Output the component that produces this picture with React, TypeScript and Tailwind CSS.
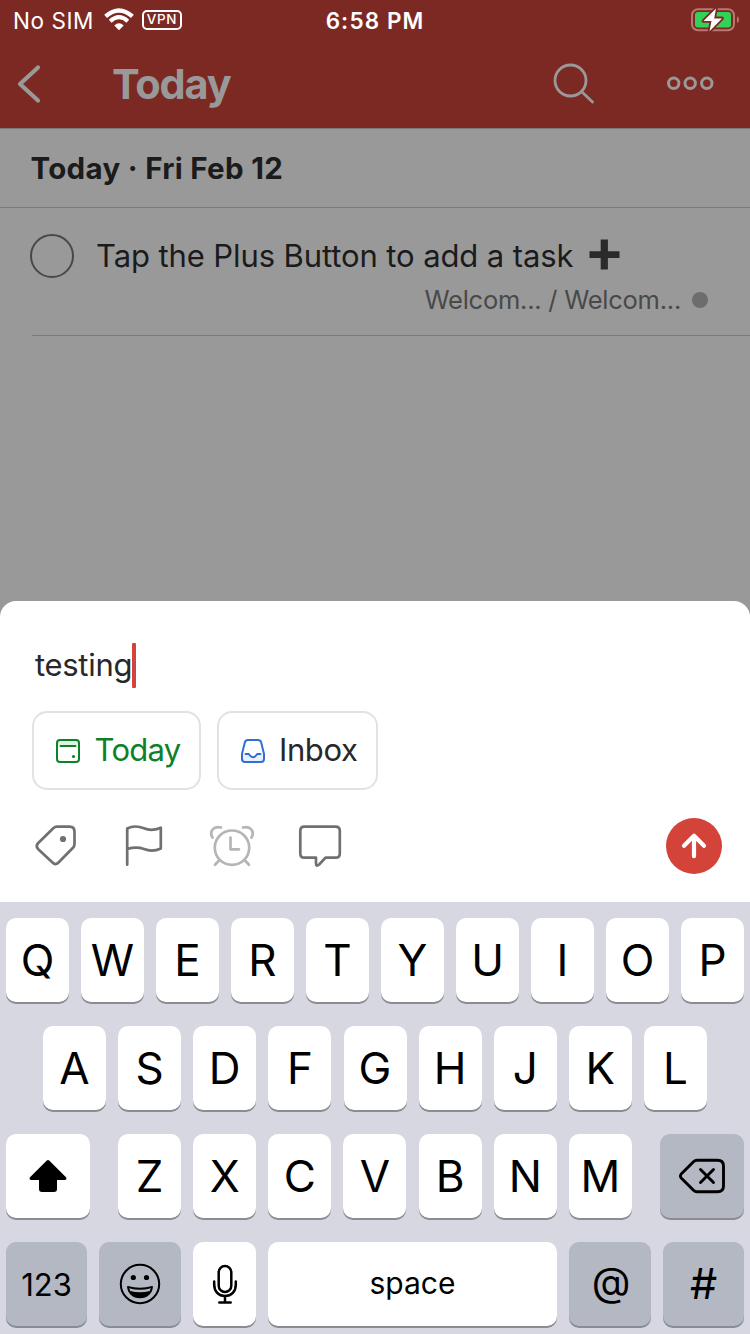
import type { ReactNode } from "react";

function StatusBar() {
  return (
    <div className="flex h-10 items-center justify-between text-white">
      <div className="flex flex-1 items-center pl-[13px]">
        <span className="whitespace-nowrap pt-[2px] text-[22.5px] leading-[38px] tracking-[0.55px]">No SIM</span>
        <svg className="ml-[9px]" width="32" height="24" viewBox="0 0 32 24" fill="none">
          <path d="M2.6 8.4 Q16 -3.6 29.4 8.4" stroke="white" strokeWidth="4.3" />
          <path d="M7.2 13.2 Q16 5.2 24.8 13.2" stroke="white" strokeWidth="4.1" />
          <path d="M11.3 17.4 Q16 13.2 20.7 17.4 L16 22.2 Z" fill="white" />
        </svg>
        <span className="ml-[7px] flex h-5 w-10 items-center justify-center rounded-[5px] border-2 border-white text-[13.5px] font-medium leading-none tracking-[0.6px]">
          VPN
        </span>
      </div>
      <span className="whitespace-nowrap pr-[3px] pt-[2px] text-[22.5px] font-semibold tracking-[1.1px]">6:58 PM</span>
      <div className="flex flex-1 justify-end pr-[10px]">
        <svg width="50" height="26" viewBox="0 0 50 26" fill="none">
          <rect x="2" y="2.2" width="42" height="21" rx="6" stroke="#b97772" strokeWidth="2" />
          <path d="M47 9.5 Q49 10 49 12.7 Q49 15.4 47 16 Z" fill="#b97772" />
          <rect x="5" y="5" width="36" height="15.5" rx="3" fill="#32d158" />
          <path
            d="M26 1.5 L13.5 14 H21.5 L19.5 24.3 L32 11.4 H24.2 Z"
            fill="white"
            stroke="#7d2923"
            strokeWidth="3.6"
            strokeLinejoin="round"
            paintOrder="stroke"
          />
        </svg>
      </div>
    </div>
  );
}

function NavBar() {
  return (
    <div className="flex h-22 items-center">
      <svg className="ml-[14px]" width="30" height="48" viewBox="0 0 30 48" fill="none">
        <path d="M24 7.5 L6 24 L24 40.5" stroke="#999" strokeWidth="4.2" strokeLinecap="round" strokeLinejoin="round" />
      </svg>
      <h1 className="ml-[68px] flex-1 whitespace-nowrap pt-[2px] text-[41.5px] font-bold leading-none tracking-[-1.2px] text-[#999]">
        Today
      </h1>
      <svg className="-mt-[3px]" width="46" height="46" viewBox="0 0 46 46" fill="none" stroke="#999" strokeWidth="2.8" strokeLinecap="round">
        <circle cx="20.5" cy="20.5" r="15.5" />
        <path d="M31.5 31.5 L42.5 42" />
      </svg>
      <svg className="ml-[70px] mr-[36px]" width="48" height="16" viewBox="0 0 48 16" fill="none" stroke="#999" strokeWidth="3">
        <circle cx="7.7" cy="7.2" r="5.2" />
        <circle cx="24.2" cy="7.2" r="5.2" />
        <circle cx="40.8" cy="7.2" r="5.2" />
      </svg>
    </div>
  );
}

function TaskList() {
  return (
    <main className="text-[#1b1b1c]">
      <h2 className="h-20 whitespace-nowrap border-y border-[#7b7b7b] pl-[30.5px] text-[29.5px] font-bold leading-[79px] tracking-[0.3px]">
        Today · Fri Feb 12
      </h2>
      <div className="ml-8 h-32 border-b border-[#7b7b7b]">
        <div className="flex h-[70px] items-end">
          <span className="-ml-[2px] h-11 w-11 rounded-full border-2 border-[#484848]" />
          <span className="ml-[22px] whitespace-nowrap text-[31px] leading-[44px] tracking-[-0.1px]">
            Tap the Plus Button to add a task
          </span>
          <svg className="mb-[8px] ml-[16px]" width="31" height="31" viewBox="0 0 31 31" fill="#2a2a2b">
            <path d="M11.7 0.5h7.2v11.8h11.6v6.8H18.9v11.4h-7.2V19.1H0.5v-6.8h11.2z" />
          </svg>
        </div>
        <div className="flex items-center justify-end pr-[42px] text-[25.5px] leading-[44px] tracking-[-0.25px] text-[#494949]">
          <span className="whitespace-nowrap">Welcom... / Welcom...</span>
          <span className="ml-[11px] h-4 w-4 rounded-full bg-[#6f6c70]" />
        </div>
      </div>
    </main>
  );
}

function ComposeSheet() {
  return (
    <section className="h-[301px] rounded-t-[16px] bg-white text-[#282828]">
      <div className="flex h-[110px] items-center pl-[35px] pt-[19px]">
        <span className="-mt-[2px] whitespace-nowrap text-[31px] leading-none tracking-[-0.3px]">testing</span>
        <span className="h-[45px] w-1 rounded-[1px] bg-[#d4443a]" />
      </div>
      <div className="flex gap-4 pl-8">
        <div className="flex h-[79px] w-[169px] items-center rounded-[15px] border-2 border-[#e2e2e2] pl-[21px] text-[#0c8128]">
          <svg width="26" height="26" viewBox="0 0 26 26" fill="none" stroke="currentColor" strokeWidth="2">
            <path d="M2 5 a3 3 0 0 1 3-3 h16 a3 3 0 0 1 3 3 v2 H2z" fill="#e0f2e2" stroke="none" />
            <rect x="2" y="2" width="22" height="22" rx="3" />
            <path d="M5.5 8 H20.5" strokeLinecap="round" />
            <circle cx="18.5" cy="18.5" r="1.6" fill="currentColor" stroke="none" />
          </svg>
          <span className="-mt-[2px] ml-[13.5px] whitespace-nowrap text-[31px] leading-none tracking-[-0.7px]">Today</span>
        </div>
        <div className="flex h-[79px] w-[161px] items-center rounded-[15px] border-2 border-[#e2e2e2] pl-[21px]">
          <svg width="26" height="26" viewBox="0 0 26 26" fill="none" stroke="#336fd3" strokeWidth="2" strokeLinejoin="round">
            <path d="M2.5 16.5 H8.5 C9.5 16.5 10 19.2 13 19.2 C16 19.2 16.5 16.5 17.5 16.5 H23.5 V23.5 H2.5Z" fill="#e8f1fd" stroke="none" />
            <path d="M8 2 H18 Q20.5 2 21.2 4.5 L24 16 V21 Q24 24 21 24 H5 Q2 24 2 21 V16 L4.8 4.5 Q5.5 2 8 2Z" />
            <path d="M5.5 16 H8.5 C9.5 16 10 19.2 13 19.2 C16 19.2 16.5 16 17.5 16 H20.5" strokeLinecap="round" />
          </svg>
          <span className="-mt-[2px] ml-[13px] whitespace-nowrap text-[31px] leading-none tracking-[-0.4px]">Inbox</span>
        </div>
      </div>
      <div className="flex h-28 items-center pl-8 pr-7 text-[#707070]">
        <svg width="48" height="48" viewBox="0 0 48 48" fill="none" stroke="currentColor" strokeWidth="2.7" strokeLinejoin="round">
          <path d="M25 4.7 H37.5 Q42.5 4.7 42.5 9.7 V22 Q42.5 24.2 41 25.7 L26.5 40.5 Q23.5 43.6 20.5 40.5 L6 27 Q3.5 24 6 21.2 L21 6.5 Q23 4.7 25 4.7Z" />
          <circle cx="31" cy="17" r="3.1" fill="currentColor" stroke="none" />
        </svg>
        <svg className="ml-10" width="48" height="48" viewBox="0 0 48 48" fill="none" stroke="currentColor" strokeWidth="2.7" strokeLinecap="round" strokeLinejoin="round">
          <path d="M7.2 42.7 V6.5 C13 3.5 19 4.3 24 6.3 C29 8.5 36 7.7 40.8 5.7 V26.5 C35 29.2 29 29 24 27 C18 24.7 13 25.3 7.2 27" />
        </svg>
        <svg className="ml-10" width="48" height="48" viewBox="0 0 48 48" fill="none" stroke="#b5b5b5" strokeWidth="2.7" strokeLinecap="round" strokeLinejoin="round">
          <circle cx="24" cy="25.7" r="17.2" />
          <path d="M22.5 15.5 V27.3 H31" />
          <path d="M4.5 15.5 C1 9.5 5.5 3.5 13 5.5" />
          <path d="M43.5 15.5 C47 9.5 42.5 3.5 35 5.5" />
          <path d="M11.5 38 L7 42.7 M36.5 38 L41 42.7" />
        </svg>
        <svg className="ml-10" width="48" height="48" viewBox="0 0 48 48" fill="none" stroke="currentColor" strokeWidth="2.7" strokeLinecap="round" strokeLinejoin="round">
          <path d="M8.2 4.7 H39.6 Q43.8 4.7 43.8 8.9 V31.5 Q43.8 35.7 39.6 35.7 H29.5 L23.2 42.5 Q20.2 45 20 42 V35.7 H8.2 Q4.3 35.7 4.3 31.5 V8.9 Q4.3 4.7 8.2 4.7Z" />
        </svg>
        <svg className="ml-auto" width="56" height="56" viewBox="0 0 56 56" fill="none">
          <circle cx="28" cy="28" r="28" fill="#d4433a" />
          <path d="M28 38.2 V18.2 M18 27.8 L28 17.8 L38 27.8" stroke="white" strokeWidth="4.2" strokeLinecap="round" strokeLinejoin="round" />
        </svg>
      </div>
    </section>
  );
}

function Key({ children, className = "w-[63px] bg-white text-[44px]" }: { children: ReactNode; className?: string }) {
  return (
    <div
      className={`flex h-[84px] shrink-0 items-center justify-center rounded-[10px] leading-none shadow-[0_2px_0_#8b8c91] ${className}`}
    >
      {children}
    </div>
  );
}

function Keyboard() {
  return (
    <section className="flex h-[432px] flex-col gap-6 bg-[#d6d7e0] px-[6px] pt-4 text-black">
      <div className="flex justify-between">
        {"QWERTYUIOP".split("").map((k) => (
          <Key key={k}>{k}</Key>
        ))}
      </div>
      <div className="flex justify-between px-[37px]">
        {"ASDFGHJKL".split("").map((k) => (
          <Key key={k}>{k}</Key>
        ))}
      </div>
      <div className="flex justify-between">
        <Key className="w-[84px] bg-white">
          <svg width="38" height="34" viewBox="0 0 38 34" fill="black">
            <path d="M17.8 1.6 Q19 0.4 20.2 1.6 L37 18.2 Q38.3 21 36 21 H28 V30 Q28 33 25 33 H13 Q10 33 10 30 V21 H2 Q-0.3 21 1 18.2Z" />
          </svg>
        </Key>
        <div className="flex w-[514px] justify-between">
          {"ZXCVBNM".split("").map((k) => (
            <Key key={k}>{k}</Key>
          ))}
        </div>
        <Key className="w-[84px] bg-[#b3b8c3]">
          <svg width="48" height="36" viewBox="0 0 48 36" fill="none" stroke="black" strokeWidth="2.9" strokeLinecap="round" strokeLinejoin="round">
            <path d="M19 2.2 H39.5 Q45.5 2.2 45.5 8 V28 Q45.5 33.8 39.5 33.8 H19 Q17 33.8 15.5 32.3 L3.2 20 Q1.7 18 3.2 16 L15.5 3.7 Q17 2.2 19 2.2Z" />
            <path d="M22.5 11.5 L35.5 24.5 M35.5 11.5 L22.5 24.5" />
          </svg>
        </Key>
      </div>
      <div className="flex justify-between">
        <Key className="w-[81px] bg-[#b3b8c3] text-[31px]">123</Key>
        <Key className="w-[82px] bg-[#b3b8c3]">
          <svg width="42" height="42" viewBox="0 0 42 42" fill="none">
            <circle cx="21" cy="21" r="19.2" stroke="black" strokeWidth="2" />
            <circle cx="14.3" cy="14.5" r="2.6" fill="black" />
            <circle cx="27.5" cy="14.5" r="2.6" fill="black" />
            <path d="M8.7 23.7 Q21 27 33.3 23.7 C33 30 28 34.6 21 34.6 C14 34.6 9 30 8.7 23.7Z" fill="black" stroke="black" strokeWidth="1.2" strokeLinejoin="round" />
            <path d="M10.2 25.2 Q21 28.2 31.8 25.2 L30.8 28 Q21 30.4 11.2 28Z" fill="#b3b8c3" />
          </svg>
        </Key>
        <Key className="w-[63px] bg-white">
          <svg width="26" height="42" viewBox="0 0 26 42" fill="none" stroke="black" strokeWidth="2.5" strokeLinecap="round">
            <rect x="6.7" y="3" width="12.6" height="26" rx="6.3" />
            <path d="M2.2 18.5 V21.5 C2.2 28.5 6.5 33 13 33 C19.5 33 23.8 28.5 23.8 21.5 V18.5 M13 33 V39.5 M7.3 39.5 H18.7" />
          </svg>
        </Key>
        <Key className="w-[289px] bg-white pb-[2px] text-[30px]">space</Key>
        <Key className="w-[82px] bg-[#b3b8c3] pb-[5px] pl-[2px] text-[40px]">@</Key>
        <Key className="w-[81px] bg-[#b3b8c3] pb-[2px] text-[43px]">#</Key>
      </div>
    </section>
  );
}

export default function App() {
  return (
    <div className="flex h-[1334px] w-[750px] flex-col overflow-hidden bg-[#999] font-['Inter','Liberation_Sans',sans-serif]">
      <header className="bg-[#7d2923]">
        <StatusBar />
        <NavBar />
      </header>
      <TaskList />
      <div className="mt-auto">
        <ComposeSheet />
        <Keyboard />
      </div>
    </div>
  );
}
